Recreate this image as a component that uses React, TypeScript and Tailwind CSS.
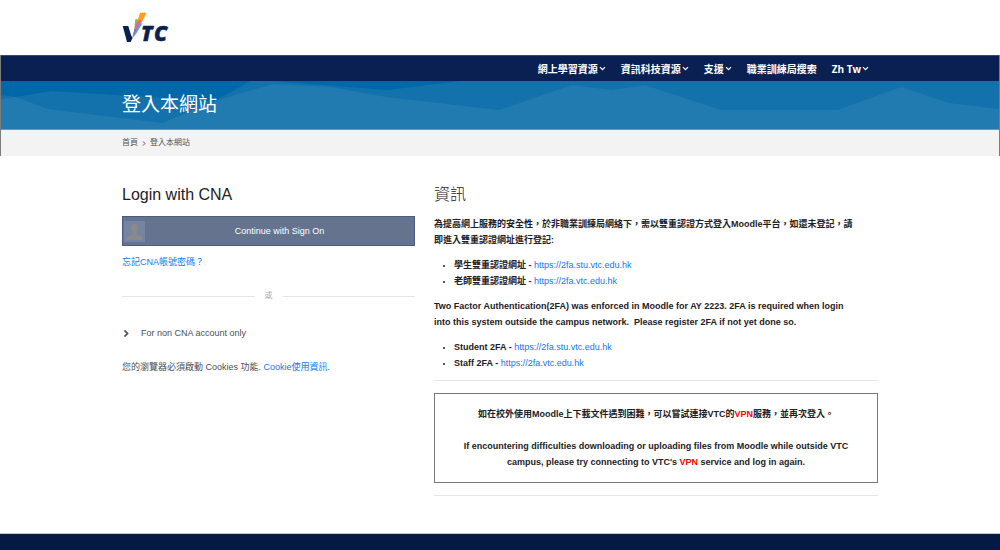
import type { ReactNode } from 'react'

interface NavItem {
  label: string
  hasMenu: boolean
}

const navItems: NavItem[] = [
  { label: '網上學習資源', hasMenu: true },
  { label: '資訊科技資源', hasMenu: true },
  { label: '支援', hasMenu: true },
  { label: '職業訓練局搜索', hasMenu: false },
  { label: 'Zh Tw', hasMenu: true },
]

const Container = ({ children }: { children: ReactNode }) => (
  <div className="mx-auto w-full max-w-[756px]">{children}</div>
)

const TextLink = ({ children }: { children: ReactNode }) => (
  <a href="#" className="font-normal text-[#0f78f5] hover:underline">{children}</a>
)

const Logo = () => (
  <svg width="56" height="55" viewBox="0 -10 56 55" role="img" aria-label="VTC">
    <g fontFamily="'Open Sans', sans-serif" fontSize="21" fontWeight="800" fontStyle="italic" fill="#0a1f52" stroke="#0a1f52" strokeWidth="0.5">
      <text x="19" y="31">T</text>
      <text x="32" y="31">C</text>
    </g>
    <path d="M0.700 16H6.300L9 25L10.500 28L8.700 32H5Z" fill="#0a1f52" />
    <path d="M13.300 9.300H18L15 17L13 22L11.500 26Z" fill="#7ac143" />
    <path d="M18 2.700H24.700L19.500 13L17 12L15.500 11Z" fill="#f9a11b" />
    <path d="M14 14L18 9.500L19.500 12L15 21L10.500 28Z" fill="#ef5ba1" />
    <path d="M17.500 14L20.700 13L14 24L10 28.500Z" fill="#35b5e5" />
    <path d="M12.500 19L14 20L10 29Z" fill="#a45aa8" />
  </svg>
)

const Chevron = ({ down = false }: { down?: boolean }) => (
  <svg width="7" height="7" viewBox="0 0 7 7" fill="none" stroke="currentColor" strokeWidth={down ? 1.2 : 1.7} aria-hidden="true">
    {down ? <path d="M1 2.200L3.500 4.700L6 2.200" /> : <path d="M2.500 0.500L5.500 3.500L2.500 6.500" />}
  </svg>
)

const BannerPattern = () => (
  <svg className="absolute inset-0 h-full w-full" viewBox="0 0 1000 48" preserveAspectRatio="none" aria-hidden="true">
    <path d="M0 14L15 16L50 10L214 20L250 0H272L387 9L460 0H1000V48H0Z" fill="#1371ac" />
    <path d="M0 18L15 16L47 28L162 42L214 20L272 3L330 6L387 16L499 29L572 4L612 9L645 4L722 29H838L902 6L950 22L1000 28V48H0Z" fill="#217ab0" />
  </svg>
)

const App = () => (
  <div className="flex min-h-screen flex-col bg-white font-['Liberation_Sans','Noto_Sans_CJK_TC',sans-serif] text-[9px] leading-4 text-[#1d2125]">
    <header>
      <Container>
        <div className="flex h-[55px] items-center">
          <a href="#"><Logo /></a>
        </div>
      </Container>
    </header>

    <div className="border-x border-[#7c7c7c]">
      <nav className="border-t border-[#3a4a70] bg-[#0a1f52]">
        <Container>
          <ul className="flex h-[25px] items-center justify-end gap-[15px] pr-[9px] font-['Open_Sans','Noto_Sans_CJK_TC',sans-serif] text-[10px] font-bold text-white">
            {navItems.map((item) => (
              <li key={item.label}>
                <a href="#" className="flex items-center gap-px">
                  {item.label}
                  {item.hasMenu && <Chevron down />}
                </a>
              </li>
            ))}
          </ul>
        </Container>
      </nav>

      <div className="relative border-b border-[#5b9cc4] bg-[#0067a8]">
        <BannerPattern />
        <div className="relative">
          <Container>
            <h1 className="py-3 text-[19px] leading-6 text-white">登入本網站</h1>
          </Container>
        </div>
      </div>

      <div className="bg-[#f3f3f3]">
        <Container>
          <nav className="flex h-[26px] items-center gap-0.5 text-[8px] text-[#555]">
            <a href="#">首頁</a>
            <svg width="8" height="5" viewBox="0 0 8 5" fill="none" stroke="currentColor" aria-hidden="true">
              <path d="M3 0.500L5 2.500L3 4.500" />
            </svg>
            <span>登入本網站</span>
          </nav>
        </Container>
      </div>
    </div>

    <main className="flex-1">
      <Container>
        <div className="grid grid-cols-[33fr_50fr] gap-[19px] pt-[27px]">
          <section>
            <h2 className="mb-[9px] text-base leading-6">Login with CNA</h2>
            <button type="button" className="relative h-[30px] w-full border border-[#4b5c80] bg-[#65738e] pl-[22px] text-white">
              <svg className="absolute top-1 left-px" width="21" height="21" viewBox="0 0 21 21" aria-hidden="true">
                <rect width="21" height="21" fill="#7584a0" />
                <path d="M10.500 3C13 3 14.500 5 14 8C13.700 10 13 11 12.500 12V13.500L17 15.500Q18.500 16.500 18.500 19H2.500Q2.500 16.500 4 15.500L8.500 13.500V12C8 11 7.300 10 7 8C6.500 5 8 3 10.500 3Z" fill="#8b8a8b" />
              </svg>
              Continue with Sign On
            </button>
            <p className="mt-2"><TextLink>忘記CNA帳號密碼？</TextLink></p>

            <div className="my-[18px] flex items-center gap-2.5 text-[8px] text-[#aaa]">
              <hr className="flex-1 border-[#e6e6e6]" />
              或
              <hr className="flex-1 border-[#e6e6e6]" />
            </div>

            <button type="button" className="mt-[21px] flex items-center gap-3 text-[#495057]">
              <Chevron />
              For non CNA account only
            </button>
            <p className="mt-[18px] text-[#495057]">
              您的瀏覽器必須啟動 Cookies 功能. <TextLink>Cookie使用資訊</TextLink>.
            </p>
          </section>

          <section className="font-bold">
            <h2 className="mb-[9px] text-base leading-6 font-light">資訊</h2>
            <p>
              為提高網上服務的安全性，於非職業訓練局網絡下，需以雙重認證方式登入Moodle平台，如還未登記，請<br />
              即進入雙重認證網址進行登記:
            </p>
            <ul className="my-[9px] list-disc pl-5 marker:text-[7px]">
              <li>學生雙重認證網址 - <TextLink>https://2fa.stu.vtc.edu.hk</TextLink></li>
              <li>老師雙重認證網址 - <TextLink>https://2fa.vtc.edu.hk</TextLink></li>
            </ul>
            <p>
              Two Factor Authentication(2FA) was enforced in Moodle for AY 2223. 2FA is required when login<br />
              into this system outside the campus network.&nbsp; Please register 2FA if not yet done so.
            </p>
            <ul className="my-[9px] list-disc pl-5 marker:text-[7px]">
              <li>Student 2FA - <TextLink>https://2fa.stu.vtc.edu.hk</TextLink></li>
              <li>Staff 2FA - <TextLink>https://2fa.vtc.edu.hk</TextLink></li>
            </ul>
            <hr className="border-[#e6e6e6]" />
            <div className="my-3 border border-[#777] px-5 py-3 text-center">
              <p>如在校外使用Moodle上下載文件遇到困難，可以嘗試連接VTC的<a href="#" className="text-[#f00]">VPN</a>服務，並再次登入。</p>
              <p className="mt-4">
                If encountering difficulties downloading or uploading files from Moodle while outside VTC<br />
                campus, please try connecting to VTC's <a href="#" className="text-[#f00]">VPN</a> service and log in again.
              </p>
            </div>
            <hr className="border-[#e6e6e6]" />
          </section>
        </div>
      </Container>
    </main>

    <footer className="h-[17px] border-t border-[#c8ccd6] bg-[#041a45]" />
  </div>
)

export default App
